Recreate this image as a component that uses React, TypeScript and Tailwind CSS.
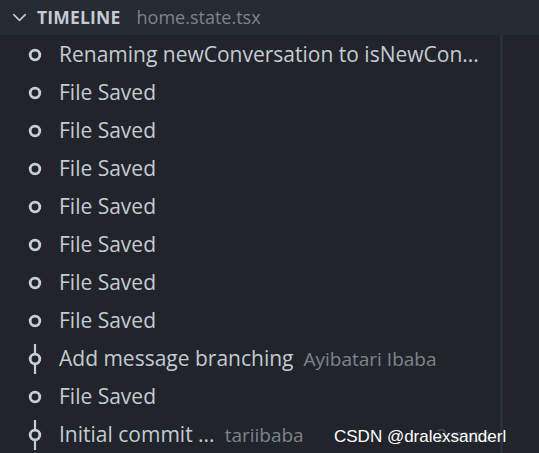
import { ChevronDown } from "lucide-react";

type Item = { label: string; desc?: string; commit?: boolean; time?: string };

const ITEMS: Item[] = [
  { label: "Renaming newConversation to isNewCon..." },
  { label: "File Saved" },
  { label: "File Saved" },
  { label: "File Saved" },
  { label: "File Saved" },
  { label: "File Saved" },
  { label: "File Saved" },
  { label: "File Saved" },
  { label: "Add message branching", desc: "Ayibatari Ibaba", commit: true },
  { label: "File Saved" },
  { label: "Initial commit ...", desc: "tariibaba", commit: true, time: "2 mos" },
];

function Dot({ commit }: { commit?: boolean }) {
  return (
    <svg width="14" height="30" viewBox="0 0 14 30" className="shrink-0">
      {commit && <line x1="7" y1="0" x2="7" y2="30" stroke="#c8ccd3" strokeWidth="2.2" />}
      <circle cx="7" cy="15" r="4.8" fill="#21252b" stroke="#c8ccd3" strokeWidth="2.8" />
    </svg>
  );
}

export default function App() {
  return (
    <div
      className="relative h-[453px] w-[539px] overflow-hidden bg-[#21252b]"
      style={{ fontFamily: '"Open Sans", "Noto Sans", sans-serif' }}
    >
      <div className="flex h-[35px] items-center bg-[#262a32] pl-[8px]">
        <ChevronDown size={23} strokeWidth={1.6} className="text-[#c5cad3]" />
        <span className="ml-[6px] text-[17.5px] font-bold tracking-[0.2px] text-[#c5cad3]">TIMELINE</span>
        <span className="ml-[16px] text-[18px] text-[#7e838c]">home.state.tsx</span>
      </div>
      <div className="flex">
        <ul className="w-[500px] overflow-hidden pt-px">
          {ITEMS.map((it, i) => (
            <li key={i} className="flex h-[38px] items-center pl-[28px] pr-[10px]">
              <Dot commit={it.commit} />
              <span className="ml-[17px] whitespace-nowrap text-[21px] text-[#c5cad3]">{it.label}</span>
              {it.desc && (
                <span className="ml-[10px] whitespace-nowrap text-[19px] text-[#7e838c]">{it.desc}</span>
              )}
              {it.time && (
                <span className="ml-auto whitespace-nowrap text-[19px] text-[#4a4f57]">{it.time}</span>
              )}
            </li>
          ))}
        </ul>
        <div className="h-[418px] w-[3px] bg-[#2c3038]" />
      </div>
      <div
        className="absolute left-[334px] top-[424px] text-[17px] text-white"
        style={{ fontFamily: '"Liberation Sans", Arial, sans-serif' }}
      >
        CSDN @dralexsanderl
      </div>
    </div>
  );
}
